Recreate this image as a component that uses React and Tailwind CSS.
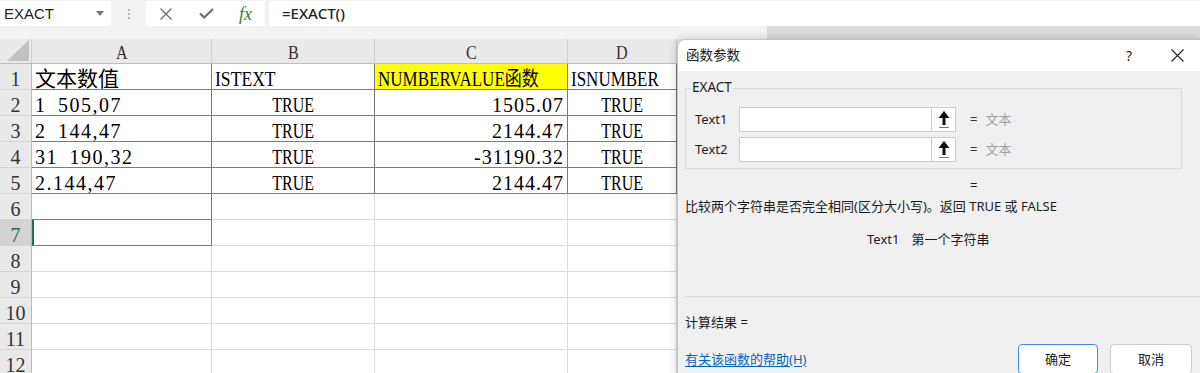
import React from 'react';

const D = 'border-r border-b border-[#7b7b7b]';
const L = 'border-r border-b border-[#dadada]';
const serif = "font-['Liberation_Serif','Noto_Sans_CJK_SC',serif]";

const data = [
  ['文本数值', 'ISTEXT', 'NUMBERVALUE函数', 'ISNUMBER'],
  ['1\u2002505,07', 'TRUE', '1505.07', 'TRUE'],
  ['2\u2002144,47', 'TRUE', '2144.47', 'TRUE'],
  ['31\u2002190,32', 'TRUE', '-31190.32', 'TRUE'],
  ['2.144,47', 'TRUE', '2144.47', 'TRUE'],
];

function Cell({ children, cls }) {
  return (
    <div className={`flex items-end overflow-hidden whitespace-pre px-[3px] text-[20px] leading-[20px] text-black ${cls}`}>
      {children}
    </div>
  );
}

function RowNum({ n }) {
  const sel = n === 7;
  return (
    <div
      className={`flex items-end justify-center border-r border-b border-r-[#b8b8b8] border-b-[#d4d4d4] text-[20px] leading-[20px] ${
        sel ? 'bg-[#d3d3d3] text-[#1e6b40]' : 'bg-[#e9e9e9] text-[#333]'
      }`}
    >
      {n}
    </div>
  );
}

function UpArrow() {
  return (
    <svg width="22" height="23" viewBox="0 0 22 23">
      <path d="M5.5 10 L11 3 L16.5 10 Z" fill="#111" />
      <rect x="9.5" y="8.5" width="3" height="8.5" fill="#111" />
      <rect x="6" y="19" width="10" height="1" fill="#777" />
    </svg>
  );
}

function ParamRow({ label, top }) {
  return (
    <div className={`flex items-center h-[25px] pl-[9px] ${top}`}>
      <span className="w-[44px]">{label}</span>
      <div className="w-[193px] h-[25px] bg-white border border-[#cccccc]" />
      <div className="w-[24px] h-[25px] bg-white border border-[#cccccc] border-l-0 flex items-center justify-center">
        <UpArrow />
      </div>
      <span className="ml-[14px] text-[#333]">=</span>
      <span className="ml-[8px] text-[#a0a0a0]">文本</span>
    </div>
  );
}

export default function App() {
  return (
    <div className={`relative w-[1200px] h-[373px] overflow-hidden bg-white ${serif}`}>
      {/* formula bar */}
      <div className="h-[26px] bg-[#f3f3f3] pt-[1px] flex">
        <div className="w-[111px] h-[25px] bg-white flex items-center">
          <span className="pl-[4px] text-[15px] leading-none font-['Liberation_Sans',sans-serif] text-[#222]">EXACT</span>
          <svg className="ml-auto mr-[7px]" width="8" height="5" viewBox="0 0 8 5">
            <path d="M0 0 H8 L4 5 Z" fill="#777" />
          </svg>
        </div>
        <div className="w-[35px] h-[25px] flex flex-col items-center justify-center gap-[2px]">
          <div className="w-[2px] h-[2px] bg-[#b8b8b8]" />
          <div className="w-[2px] h-[2px] bg-[#b8b8b8]" />
          <div className="w-[2px] h-[2px] bg-[#b8b8b8]" />
        </div>
        <div className="w-[119px] h-[25px] bg-white flex items-center">
          <div className="w-[40px] flex justify-center">
            <svg width="12" height="12" viewBox="0 0 12 12">
              <path d="M0.5 0.5 L11.5 11.5 M11.5 0.5 L0.5 11.5" stroke="#6b6b6b" strokeWidth="1.3" />
            </svg>
          </div>
          <div className="w-[40px] flex justify-center">
            <svg width="15" height="11" viewBox="0 0 15 11">
              <path d="M1 5.5 L5.2 9.5 L14 1" stroke="#6b6b6b" strokeWidth="2.1" fill="none" />
            </svg>
          </div>
          <div className="w-[39px] flex justify-center">
            <span className="italic text-[18px] leading-none text-[#2f7d4c] font-['Liberation_Serif',serif]">fx</span>
          </div>
        </div>
        <div className="w-[4px]" />
        <div className="flex-1 h-[25px] bg-white flex items-center pl-[13px]">
          <span className="text-[15px] leading-none font-medium text-[#222] font-['Noto_Sans',sans-serif]">=EXACT()</span>
        </div>
      </div>
      <div className="h-[13px] bg-[#f3f3f3] flex">
        <div className="ml-auto w-[433px] h-full bg-[#dcdcdc]" />
      </div>

      {/* column header */}
      <div className="grid grid-cols-[32px_180px_163px_193px_109px_1fr] h-[25px] bg-[#e9e9e9] border-b border-[#bdbdbd] text-[#333]">
        <div className="flex items-end justify-end pr-[2px] pb-[2px] border-r border-[#cfcfcf]">
          <svg width="22" height="21" viewBox="0 0 22 21">
            <path d="M22 0 L22 21 L0 21 Z" fill="#c2c2c2" />
          </svg>
        </div>
        {['A', 'B', 'C', 'D', 'E'].map((l) => (
          <div key={l} className="flex items-end justify-center border-r border-[#cfcfcf] text-[19px] leading-[20px]">
            <span className="inline-block scale-x-[0.85] origin-center">{l}</span>
          </div>
        ))}
      </div>

      {/* rows */}
      {Array.from({ length: 12 }, (_, i) => i + 1).map((n) => {
        const r = data[n - 1];
        if (r) {
          if (n === 1) {
            return (
              <div key={n} className="grid grid-cols-[32px_180px_163px_193px_109px_1fr] h-[26px]">
                <RowNum n={n} />
                <Cell cls={`${D} justify-start`}>
                  <span className="inline-block text-[21px]">{r[0]}</span>
                </Cell>
                <Cell cls={`${D} justify-start`}>
                  <span className="inline-block scale-x-[0.88] origin-left">{r[1]}</span>
                </Cell>
                <Cell cls={`${D} justify-start bg-[#ffff00]`}>
                  <span className="inline-block scale-x-[0.85] origin-left">{r[2]}</span>
                </Cell>
                <Cell cls={`${D} justify-start`}>
                  <span className="inline-block scale-x-[0.85] origin-left">{r[3]}</span>
                </Cell>
                <Cell cls={L} />
              </div>
            );
          }
          return (
            <div key={n} className="grid grid-cols-[32px_180px_163px_193px_109px_1fr] h-[26px]">
              <RowNum n={n} />
              <Cell cls={`${D} justify-start`}>
                <span className="tracking-[1.5px]">{r[0]}</span>
              </Cell>
              <Cell cls={`${D} justify-center`}>
                <span className="inline-block scale-x-[0.8] origin-center">{r[1]}</span>
              </Cell>
              <Cell cls={`${D} justify-end`}>
                <span className="tracking-[1px]">{r[2]}</span>
              </Cell>
              <Cell cls={`${D} justify-center`}>
                <span className="inline-block scale-x-[0.8] origin-center">{r[3]}</span>
              </Cell>
              <Cell cls={L} />
            </div>
          );
        }
        return (
          <div key={n} className="grid grid-cols-[32px_180px_163px_193px_109px_1fr] h-[26px]">
            <RowNum n={n} />
            <Cell
              cls={
                n === 6
                  ? D
                  : n === 7
                  ? `${D} border-l-2 border-l-[#217346]`
                  : L
              }
            />
            <Cell cls={L} />
            <Cell cls={L} />
            <Cell cls={L} />
            <Cell cls={L} />
          </div>
        );
      })}

      {/* dialog */}
      <div className="absolute left-[677px] top-[39px] w-[523px] h-[345px] bg-[#f0f0f0] border-l border-t border-[#c4c4c4] rounded-tl-[8px] shadow-[0_0_10px_rgba(0,0,0,0.2)] overflow-hidden font-['Noto_Sans','Noto_Sans_CJK_SC',sans-serif] text-[13px] leading-none text-[#1b1b1b]">
        <div className="h-[31px] bg-white flex items-center">
          <span className="pl-[8px] text-[13.5px]">函数参数</span>
          <div className="ml-auto flex h-full">
            <div className="w-[44px] flex items-center justify-center text-[14px]">?</div>
            <div className="w-[46px] ml-[3px] flex items-center justify-center">
              <svg width="13" height="13" viewBox="0 0 13 13">
                <path d="M0.5 0.5 L12.5 12.5 M12.5 0.5 L0.5 12.5" stroke="#222" strokeWidth="1.1" />
              </svg>
            </div>
          </div>
        </div>
        <div className="pl-[7px]">
          <fieldset className="mt-[9px] w-[497px] border border-[#dcdcdc] pb-[6px]">
            <legend className="ml-[5px] px-[1px] h-[16px] flex items-center text-[13.5px]">EXACT</legend>
            <ParamRow label="Text1" top="mt-[11px]" />
            <ParamRow label="Text2" top="mt-[5px]" />
          </fieldset>
          <div className="mt-[8px] h-[16px] flex items-center pl-[285px]">=</div>
          <div className="mt-[3px] h-[20px] flex items-center whitespace-pre">
            比较两个字符串是否完全相同(区分大小写)。返回 TRUE 或 FALSE
          </div>
          <div className="mt-[13px] h-[20px] flex items-center pl-[182px]">
            <span>Text1</span>
            <span className="ml-[12px]">第一个字符串</span>
          </div>
          <div className="mt-[47px] h-px bg-[#dcdcdc]" />
          <div className="mt-[15px] h-[20px] flex items-center">计算结果 =</div>
          <div className="mt-[12px] h-[30px] flex items-center pr-[8px]">
            <span className="text-[#0067c0] underline underline-offset-2">有关该函数的帮助(H)</span>
            <div className="ml-auto flex">
              <div className="w-[80px] h-[30px] bg-white border border-[#3b8ee0] rounded-[4px] flex items-center justify-center">
                确定
              </div>
              <div className="w-[82px] h-[30px] ml-[12px] bg-white border border-[#cccccc] rounded-[4px] flex items-center justify-center">
                取消
              </div>
            </div>
          </div>
        </div>
      </div>
    </div>
  );
}
